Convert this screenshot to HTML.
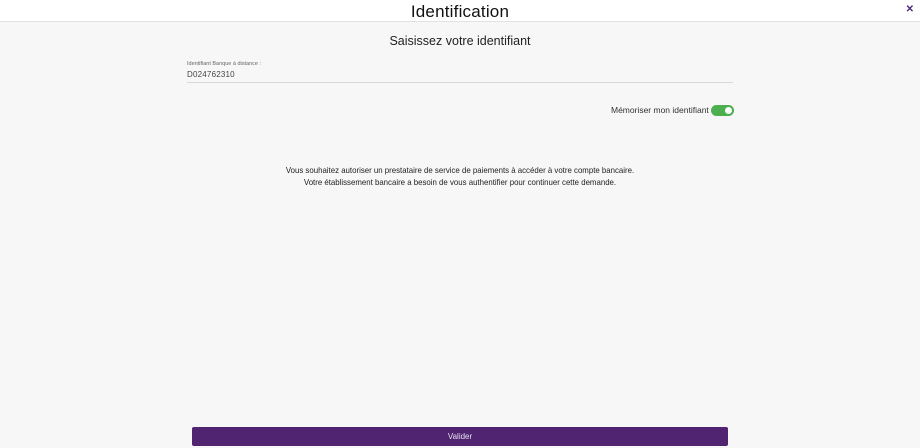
<!DOCTYPE html>
<html><head><meta charset="utf-8"><style>
*{margin:0;padding:0;box-sizing:border-box}
body{width:920px;height:448px;background:#f7f7f7;font-family:"Liberation Sans",sans-serif;color:#222;position:relative;overflow:hidden}
.hdr{position:absolute;left:0;top:0;width:920px;height:22px;background:#fff;border-bottom:1px solid #e2e2e2}
.hdr h1{font-weight:normal;font-size:17px;text-align:center;line-height:23px;color:#111;letter-spacing:0.2px}
.x{position:absolute;right:6px;top:4px;font-size:10px;color:#4e2a7a;font-weight:bold}
.sub{position:absolute;top:34px;width:920px;text-align:center;font-size:12.5px;color:#222}
.lbl{position:absolute;left:187px;top:61px;font-size:5.5px;color:#666}
.val{position:absolute;left:187px;top:70px;font-size:8px;color:#444;letter-spacing:0.2px}
.line{position:absolute;left:187px;top:82px;width:546px;height:1px;background:#d8d8d8}
.mem{position:absolute;left:611px;top:105px;font-size:8.5px;color:#333}
.tog{position:absolute;left:711px;top:105px;width:23px;height:11px;border-radius:6px;background:#4caf50}
.tog:after{content:"";position:absolute;right:2px;top:2px;width:7px;height:7px;border-radius:50%;background:#fff}
.msg{position:absolute;top:165px;width:920px;text-align:center;font-size:7.85px;line-height:11.5px;color:#222}
.btn{position:absolute;left:192px;top:427px;width:536px;height:19px;background:#502470;border-radius:2px;color:#e8e0f0;font-size:8px;text-align:center;line-height:19px}
</style></head><body>
<div class="hdr"><h1>Identification</h1><span class="x">✕</span></div>
<div class="sub">Saisissez votre identifiant</div>
<div class="lbl">Identifiant Banque à distance :</div>
<div class="val">D024762310</div>
<div class="line"></div>
<div class="mem">Mémoriser mon identifiant</div>
<div class="tog"></div>
<div class="msg">Vous souhaitez autoriser un prestataire de service de paiements à accéder à votre compte bancaire.<br>Votre établissement bancaire a besoin de vous authentifier pour continuer cette demande.</div>
<div class="btn">Valider</div>
</body></html>
